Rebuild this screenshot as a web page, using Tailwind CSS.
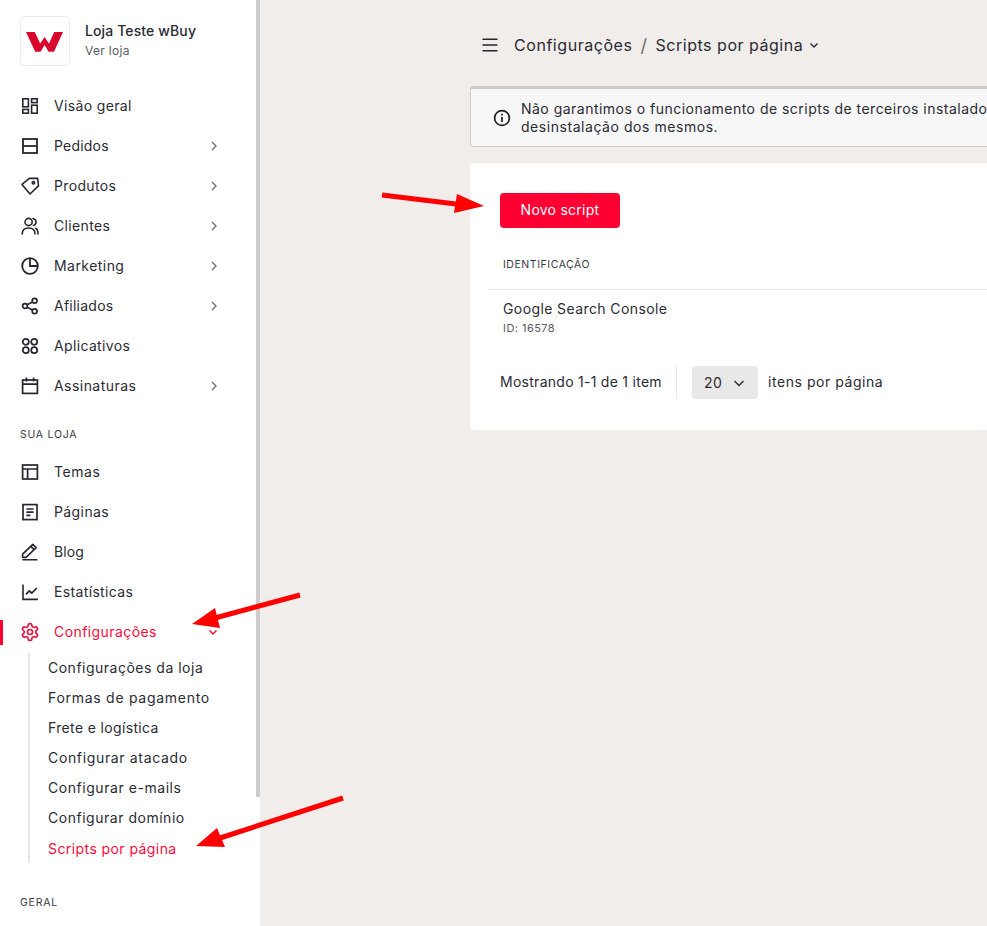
<!DOCTYPE html>
<html lang="pt-BR">
<head>
<meta charset="utf-8">
<script src="https://cdn.jsdelivr.net/npm/@tailwindcss/browser@4"></script>
<title>Scripts por página</title>
</head>
<body class="m-0">
<div class="relative flex h-[926px] w-[987px] overflow-hidden bg-[#f0edeb] font-['Inter',sans-serif] text-[14px] tracking-[0.35px] text-[#2b2b33]">

  <!-- Sidebar -->
  <aside class="relative h-full w-[260px] shrink-0 overflow-hidden bg-white">
    <div class="absolute right-0 top-0 h-[797px] w-[4px] bg-[#cccccc]"></div>

    <div class="flex items-center pl-[20px] pt-[16px]">
      <div class="flex h-[50px] w-[50px] items-center justify-center rounded-[4px] border border-[#ececec]">
        <svg class="h-[21px] w-[38px]" viewBox="0 0 38 21"><polygon fill="#d9062e" points="0,1 8.8,1 14.2,12.5 18.6,6 23,12.5 28.2,1 37,1 28,20.7 22.6,20.7 18.6,14 14.6,20.7 9.2,20.7"/></svg>
      </div>
      <div class="ml-[15px]">
        <div class="text-[14px] font-medium leading-[20px] tracking-[0.12px]">Loja Teste wBuy</div>
        <div class="text-[12px] leading-[20px] tracking-[0.3px] text-[#5b5b63]">Ver loja</div>
      </div>
    </div>

    <nav class="mt-[20px]">
      <a class="flex h-[40px] items-center pl-[20px]"><svg class="h-[20px] w-[20px]" viewBox="0 0 20 20" fill="none" stroke="#26262e" stroke-width="1.6"><rect x="2.8" y="2.8" width="5.6" height="8"/><rect x="2.8" y="13.4" width="5.6" height="3.8"/><rect x="11.6" y="2.8" width="5.6" height="3.8"/><rect x="11.6" y="9.2" width="5.6" height="8"/></svg><span class="ml-[14px] flex-1 pb-[2px]">Visão geral</span></a>
      <a class="flex h-[40px] items-center pl-[20px]"><svg class="h-[20px] w-[20px]" viewBox="0 0 20 20" fill="none" stroke="#26262e" stroke-width="1.8"><rect x="3" y="3" width="14" height="14"/><path d="M3 10h14"/></svg><span class="ml-[14px] flex-1 pb-[2px] tracking-[0.2px]">Pedidos</span><svg class="mr-[40px] h-[12px] w-[12px]" viewBox="0 0 12 12" fill="none" stroke="#6b7280" stroke-width="1.4"><path d="M4 2l4 4-4 4"/></svg></a>
      <a class="flex h-[40px] items-center pl-[20px]"><svg class="h-[20px] w-[20px]" viewBox="0 0 20 20" fill="none" stroke="#26262e" stroke-width="1.6" stroke-linejoin="round"><path d="M2 8.4 9.3 2.4h8.3l.9 7.4L10 18z"/><circle cx="13.4" cy="6.8" r="1.2"/></svg><span class="ml-[14px] flex-1 pb-[2px]">Produtos</span><svg class="mr-[40px] h-[12px] w-[12px]" viewBox="0 0 12 12" fill="none" stroke="#6b7280" stroke-width="1.4"><path d="M4 2l4 4-4 4"/></svg></a>
      <a class="flex h-[40px] items-center pl-[20px]"><svg class="h-[20px] w-[20px]" viewBox="0 0 20 20" fill="none" stroke="#26262e" stroke-width="1.6" stroke-linecap="round"><circle cx="8.6" cy="6" r="3.6"/><path d="M2.2 18c0-3.8 2.6-6 6.4-6s6.4 2.2 6.4 6"/><path d="M13 2.6c1.8.5 3 1.8 3 3.5s-1 2.9-2.6 3.4M15.6 12.3c1.6.8 2.4 2.6 2.4 5.7"/></svg><span class="ml-[14px] flex-1 pb-[2px]">Clientes</span><svg class="mr-[40px] h-[12px] w-[12px]" viewBox="0 0 12 12" fill="none" stroke="#6b7280" stroke-width="1.4"><path d="M4 2l4 4-4 4"/></svg></a>
      <a class="flex h-[40px] items-center pl-[20px]"><svg class="h-[20px] w-[20px]" viewBox="0 0 20 20" fill="none" stroke="#26262e" stroke-width="1.8"><circle cx="10" cy="10" r="7.8"/><path d="M10 2.2V10h7.8"/></svg><span class="ml-[14px] flex-1 pb-[2px] tracking-[0.45px]">Marketing</span><svg class="mr-[40px] h-[12px] w-[12px]" viewBox="0 0 12 12" fill="none" stroke="#6b7280" stroke-width="1.4"><path d="M4 2l4 4-4 4"/></svg></a>
      <a class="flex h-[40px] items-center pl-[20px]"><svg class="h-[20px] w-[20px]" viewBox="0 0 20 20" fill="none" stroke="#26262e" stroke-width="1.7"><circle cx="5" cy="10" r="2.4"/><circle cx="14.6" cy="4.8" r="2.4"/><circle cx="14.6" cy="15.2" r="2.4"/><path d="M7.1 8.8l5.4-2.8M7.1 11.2l5.4 2.8"/></svg><span class="ml-[14px] flex-1 pb-[2px] tracking-[0.25px]">Afiliados</span><svg class="mr-[40px] h-[12px] w-[12px]" viewBox="0 0 12 12" fill="none" stroke="#6b7280" stroke-width="1.4"><path d="M4 2l4 4-4 4"/></svg></a>
      <a class="flex h-[40px] items-center pl-[20px]"><svg class="h-[20px] w-[20px]" viewBox="0 0 20 20" fill="none" stroke="#26262e" stroke-width="1.7"><circle cx="5.8" cy="5.8" r="3"/><circle cx="14.2" cy="5.8" r="3"/><circle cx="5.8" cy="14.2" r="3"/><circle cx="14.2" cy="14.2" r="3"/></svg><span class="ml-[14px] flex-1 pb-[2px]">Aplicativos</span></a>
      <a class="flex h-[40px] items-center pl-[20px]"><svg class="h-[20px] w-[20px]" viewBox="0 0 20 20" fill="none" stroke="#26262e" stroke-width="1.7"><rect x="2.6" y="4" width="14.8" height="13.4"/><path d="M2.6 8.2h14.8M6.4 1.6v4M13.6 1.6v4"/></svg><span class="ml-[14px] flex-1 pb-[2px] tracking-[0.45px]">Assinaturas</span><svg class="mr-[40px] h-[12px] w-[12px]" viewBox="0 0 12 12" fill="none" stroke="#6b7280" stroke-width="1.4"><path d="M4 2l4 4-4 4"/></svg></a>

      <div class="mb-[7px] mt-[19px] pl-[20px] text-[10.5px] leading-[20px] tracking-[0.75px] text-[#3a3a42]">SUA LOJA</div>

      <a class="flex h-[40px] items-center pl-[20px]"><svg class="h-[20px] w-[20px]" viewBox="0 0 20 20" fill="none" stroke="#26262e" stroke-width="1.7"><rect x="2.6" y="3" width="14.8" height="14"/><path d="M2.6 7h14.8M7.6 7v10"/></svg><span class="ml-[14px] flex-1 pb-[2px] tracking-[0.55px]">Temas</span></a>
      <a class="flex h-[40px] items-center pl-[20px]"><svg class="h-[20px] w-[20px]" viewBox="0 0 20 20" fill="none" stroke="#26262e" stroke-width="1.7"><rect x="3" y="2.6" width="14" height="15"/><path d="M6.4 7h7.2M6.4 10.2h7.2M6.4 13.4h4"/></svg><span class="ml-[14px] flex-1 pb-[2px] tracking-[0.4px]">Páginas</span></a>
      <a class="flex h-[40px] items-center pl-[20px]"><svg class="h-[20px] w-[20px]" viewBox="0 0 20 20" fill="none" stroke="#26262e" stroke-width="1.6" stroke-linejoin="round"><path d="M2.6 15.4v-3.2L12.8 2.4l3.4 3.2L6 15.4z"/><path d="M10.8 4.4l3.4 3.2M2.4 17.8h15"/></svg><span class="ml-[14px] flex-1 pb-[2px] tracking-[0.1px]">Blog</span></a>
      <a class="flex h-[40px] items-center pl-[20px]"><svg class="h-[20px] w-[20px]" viewBox="0 0 20 20" fill="none" stroke="#26262e" stroke-width="1.6"><path d="M3 2.4v15h15"/><path d="M6 12.4l3.2-3.4 2.6 2 5-5" stroke-width="1.7"/></svg><span class="ml-[14px] flex-1 pb-[2px]">Estatísticas</span></a>
      <a class="relative flex h-[40px] items-center pl-[20px] text-[#ff0a3c]">
        <span class="absolute left-0 top-[8px] h-[25px] w-[3px] bg-[#ff0033]"></span>
        <svg class="h-[20px] w-[20px]" viewBox="0 0 24 24" fill="none" stroke="#e8123c" stroke-width="2" stroke-linejoin="round"><path d="M12.22 2h-.44a2 2 0 0 0-2 2v.18a2 2 0 0 1-1 1.73l-.43.25a2 2 0 0 1-2 0l-.15-.08a2 2 0 0 0-2.73.73l-.22.38a2 2 0 0 0 .73 2.73l.15.1a2 2 0 0 1 1 1.72v.51a2 2 0 0 1-1 1.74l-.15.09a2 2 0 0 0-.73 2.73l.22.38a2 2 0 0 0 2.73.73l.15-.08a2 2 0 0 1 2 0l.43.25a2 2 0 0 1 1 1.73V20a2 2 0 0 0 2 2h.44a2 2 0 0 0 2-2v-.18a2 2 0 0 1 1-1.73l.43-.25a2 2 0 0 1 2 0l.15.08a2 2 0 0 0 2.73-.73l.22-.39a2 2 0 0 0-.73-2.73l-.15-.08a2 2 0 0 1-1-1.74v-.5a2 2 0 0 1 1-1.74l.15-.09a2 2 0 0 0 .73-2.73l-.22-.38a2 2 0 0 0-2.73-.73l-.15.08a2 2 0 0 1-2 0l-.43-.25a2 2 0 0 1-1-1.73V4a2 2 0 0 0-2-2z"/><circle cx="12" cy="12" r="3"/></svg>
        <span class="ml-[14px] flex-1 pb-[2px] tracking-[0.42px]">Configurações</span>
        <svg class="mr-[41px] h-[12px] w-[12px]" viewBox="0 0 12 12" fill="none" stroke="#e8123c" stroke-width="1.5"><path d="M2.5 4.5 6 8l3.5-3.5"/></svg>
      </a>

      <div class="ml-[28px] mt-[11px] border-l-2 border-[#e6e6e6] pl-[18px]">
        <div class="-mt-[10px]">
          <a class="flex h-[30px] items-center pb-[2px] tracking-[0.5px]">Configurações da loja</a>
          <a class="flex h-[30px] items-center pb-[2px] tracking-[0.72px]">Formas de pagamento</a>
          <a class="flex h-[30px] items-center pb-[2px]">Frete e logística</a>
          <a class="flex h-[30px] items-center pb-[2px] tracking-[0.65px]">Configurar atacado</a>
          <a class="flex h-[30px] items-center pb-[2px] tracking-[0.55px]">Configurar e-mails</a>
          <a class="flex h-[30px] items-center pb-[2px] tracking-[0.52px]">Configurar domínio</a>
          <a class="flex h-[30px] items-center tracking-[0.42px] text-[#ff0a3c]">Scripts por página</a>
        </div>
      </div>

      <div class="mt-[30px] pl-[20px] text-[10.5px] leading-[20px] tracking-[0.75px] text-[#3a3a42]">GERAL</div>
    </nav>
  </aside>

  <!-- Main -->
  <main class="min-w-0 flex-1 pl-[210px]">
    <div class="w-[700px]">
      <header class="flex h-[86px] items-center pl-[12px] pt-[4px] text-[16px] tracking-[0.55px]">
        <svg class="h-[16px] w-[16px]" viewBox="0 0 16 16" fill="none" stroke="#26262e" stroke-width="1.6"><path d="M0.5 2.2h15M0.5 8h15M0.5 13.8h15"/></svg>
        <span class="ml-[16px]">Configurações</span>
        <span class="ml-[8px] text-[18px] text-[#6b6b73]">/</span>
        <span class="ml-[8px] tracking-[0.52px]">Scripts por página</span>
        <svg class="ml-[6px] h-[10px] w-[10px]" viewBox="0 0 10 10" fill="none" stroke="#2b2b33" stroke-width="1.4"><path d="M1.5 3.5 5 7l3.5-3.5"/></svg>
      </header>

      <div class="flex h-[61px] items-center rounded-[3px] border border-t-[3px] border-[#cccccc] bg-[#f7f7f7] pl-[22px]">
        <svg class="h-[18px] w-[18px] shrink-0" viewBox="0 0 18 18" fill="none" stroke="#1f1f27" stroke-width="1.7"><circle cx="9" cy="9" r="7.4"/><path d="M9 8v5M9 4.8v1.6"/></svg>
        <p class="ml-[10px] mt-[1px] whitespace-nowrap leading-[18px] tracking-[0.48px]">Não garantimos o funcionamento de scripts de terceiros instalado<br><span class="tracking-[0.55px]">desinstalação dos mesmos.</span></p>
      </div>

      <section class="mt-[16px] h-[267px] rounded-[4px] bg-white pt-[30px]">
        <button class="ml-[30px] h-[35px] w-[120px] rounded-[4px] bg-[#ff0033] pb-[2px] text-[14px] tracking-[0.25px] text-white">Novo script</button>
        <div class="ml-[18px] mt-[20px] flex h-[42px] items-center border-b border-[#e8e8e8] pb-[8px] pl-[15px] text-[10.5px] tracking-[0.55px] text-[#3a3a42]">IDENTIFICAÇÃO</div>
        <div class="pl-[33px] pt-[9px]">
          <div class="leading-[20px] tracking-[0.4px]">Google Search Console</div>
          <div class="text-[11px] leading-[18px] tracking-[0.45px] text-[#5b5b63]">ID: 16578</div>
        </div>
        <div class="ml-[30px] mt-[29px] flex h-[33px] items-center">
          <span class="w-[176px] shrink-0 pb-[2px] tracking-[0.27px]">Mostrando 1-1 de 1 item</span>
          <span class="h-full w-px bg-[#e8e8e8]"></span>
          <span class="ml-[15px] flex h-full w-[66px] items-center rounded-[4px] bg-[#e8e8e8] pl-[12px]">20<svg class="ml-[10px] h-[14px] w-[14px]" viewBox="0 0 14 14" fill="none" stroke="#2b2b33" stroke-width="1.4"><path d="M2.5 5 7 9.5 11.5 5"/></svg></span>
          <span class="ml-[10px] pb-[2px] tracking-[0.55px]">itens por página</span>
        </div>
      </section>
    </div>
  </main>

  <!-- Annotation arrows -->
  <svg class="pointer-events-none absolute left-0 top-0 h-[926px] w-[987px]" viewBox="0 0 987 926">
    <g fill="#ff0000" stroke="#ff0000">
      <path d="M382 195 456 204" stroke-width="5" fill="none"/>
      <polygon stroke="none" points="484,206 457,194 454,213"/>
      <path d="M300 595 215 618" stroke-width="5" fill="none"/>
      <polygon stroke="none" points="192,624 215,608 220,628"/>
      <path d="M343 798 220 838" stroke-width="5" fill="none"/>
      <polygon stroke="none" points="196,846 217,828 225,847"/>
    </g>
  </svg>
</div>
</body>
</html>
